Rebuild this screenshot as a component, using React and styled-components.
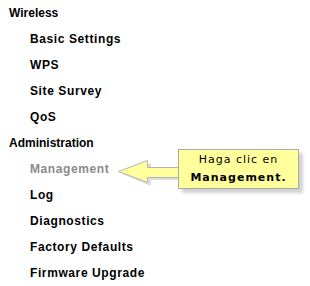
import React from 'react';
import styled, { createGlobalStyle } from 'styled-components';

const GlobalStyle = createGlobalStyle`
    html, body {
        margin: 0;
        padding: 0;
        background: #ffffff;
    }
`;

const Page = styled.div`
    position: relative;
    width: 310px;
    height: 286px;
    overflow: hidden;
    font-family: "Liberation Sans", Arial, sans-serif;
`;

const Menu = styled.ul`
    list-style: none;
    margin: 0;
    padding: 0;
`;

const Item = styled.li`
    height: 26px;
    display: flex;
    align-items: center;
    padding-left: ${(p) => (p.sub ? '30px' : '9px')};
    font-size: 12px;
    font-weight: bold;
    color: ${(p) => (p.active ? '#8a8a8a' : '#000000')};
    letter-spacing: ${(p) => (p.sub ? '0.6px' : '0')};
`;

const Callout = styled.div`
    position: absolute;
    left: 116px;
    top: 149px;
    display: flex;
    align-items: flex-start;
`;

const Arrow = styled.svg`
    display: block;
    margin-right: -1px;
`;

const Bubble = styled.div`
    width: 119px;
    height: 38px;
    background: #ffff9c;
    border: 1px solid #a8a8a8;
    box-shadow: 4px 4px 3px rgba(0, 0, 0, 0.18);
    display: flex;
    flex-direction: column;
    align-items: center;
    justify-content: center;
    font-family: "DejaVu Sans", Verdana, sans-serif;
    font-size: 11px;
    line-height: 18px;
    letter-spacing: 1px;
    color: #000;
`;

const Strong = styled.span`
    font-weight: bold;
`;

const items = [
    { label: 'Wireless' },
    { label: 'Basic Settings', sub: true },
    { label: 'WPS', sub: true },
    { label: 'Site Survey', sub: true },
    { label: 'QoS', sub: true },
    { label: 'Administration' },
    { label: 'Management', sub: true, active: true },
    { label: 'Log', sub: true },
    { label: 'Diagnostics', sub: true },
    { label: 'Factory Defaults', sub: true },
    { label: 'Firmware Upgrade', sub: true },
];

const App = () => {
    return (
        <>
            <GlobalStyle />
            <Page>
                <Menu>
                    {items.map((it) => (
                        <Item key={it.label} sub={it.sub} active={it.active}>
                            {it.label}
                        </Item>
                    ))}
                </Menu>
                <Callout>
                    <Arrow width="63" height="40" viewBox="0 0 63 40">
                        <polygon points="6,25 35,14 35,21 63,21 63,31 35,31 35,37" fill="rgba(0,0,0,0.13)" />
                        <polygon points="2.5,22.5 31.5,11.5 31.5,18.5 63,18.5 63,28.5 31.5,28.5 31.5,33.5" fill="#ffff9c" stroke="#b4b4b4" strokeWidth="1" />
                    </Arrow>
                    <Bubble>
                        <span>Haga clic en</span>
                        <Strong>Management.</Strong>
                    </Bubble>
                </Callout>
            </Page>
        </>
    );
};

export default App;
